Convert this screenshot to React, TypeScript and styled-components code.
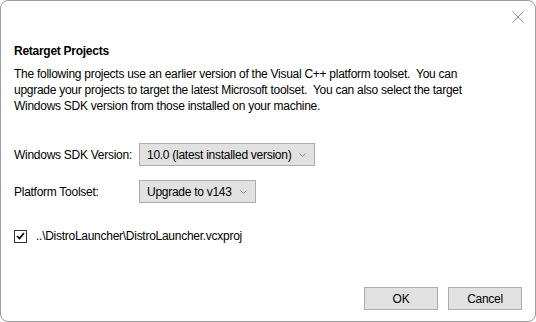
import React from "react";
import styled, { createGlobalStyle } from "styled-components";

const GlobalStyle = createGlobalStyle`
  html, body {
    margin: 0;
    padding: 0;
    background: #ffffff;
  }
  body {
    font-family: "Liberation Sans", Arial, sans-serif;
    font-size: 12px;
    letter-spacing: -0.27px;
    color: #000;
  }
`;

const Window = styled.div`
  box-sizing: border-box;
  width: 536px;
  height: 322px;
  background: #ffffff;
  border: 1px solid #9c9c9c;
  border-radius: 8px;
  display: flex;
  flex-direction: column;
  overflow: hidden;
`;

const TitleBar = styled.div`
  height: 31px;
  display: flex;
  justify-content: flex-end;
  align-items: center;
  padding-right: 10px;
`;

const CloseButton = styled.button`
  width: 14px;
  height: 14px;
  padding: 0;
  border: none;
  background: none;
  display: flex;
  align-items: center;
  justify-content: center;
`;

const Content = styled.div`
  flex: 1;
  display: flex;
  flex-direction: column;
  padding: 0 13px 11px 13px;
`;

const Title = styled.h1`
  margin: 11px 0 0 0;
  font-size: 12px;
  font-weight: 700;
  line-height: 16px;
`;

const Intro = styled.p`
  margin: 7px 0 0 0;
  line-height: 16px;
  white-space: pre;
`;

const Field = styled.div<{ $top: number }>`
  display: flex;
  align-items: center;
  margin-top: ${(p) => p.$top}px;
`;

const Label = styled.label`
  width: 125px;
  line-height: 16px;
`;

const Select = styled.div`
  box-sizing: border-box;
  height: 23px;
  display: flex;
  align-items: center;
  gap: 8px;
  padding: 0 8px 0 7px;
  background: #e1e1e1;
  border: 1px solid #adadad;
`;

const CheckRow = styled.div`
  display: flex;
  align-items: center;
  gap: 9px;
  margin-top: 25px;
  line-height: 16px;
`;

const Box = styled.span`
  box-sizing: border-box;
  width: 13px;
  height: 13px;
  border: 1px solid #333333;
  background: #fff;
  display: flex;
  align-items: center;
  justify-content: center;
`;

const Footer = styled.div`
  margin-top: auto;
  display: flex;
  justify-content: flex-end;
  gap: 10px;
`;

const Button = styled.button`
  box-sizing: border-box;
  width: 74px;
  height: 23px;
  background: #e1e1e1;
  border: 1px solid #adadad;
  font-family: inherit;
  font-size: 12px;
  letter-spacing: inherit;
  color: #000;
  padding: 0;
`;

const Chevron = () => (
  <svg width="7" height="4" viewBox="0 0 7 4">
    <path d="M0.5 0.5 L3.5 3.5 L6.5 0.5" fill="none" stroke="#8a8a8a" strokeWidth="1" />
  </svg>
);

function App() {
  return (
    <>
      <GlobalStyle />
      <Window>
        <TitleBar>
          <CloseButton aria-label="Close">
            <svg width="12" height="12" viewBox="0 0 12 12">
              <path d="M0.5 0.5 L11.5 11.5 M11.5 0.5 L0.5 11.5" stroke="#8f8f8f" strokeWidth="1" />
            </svg>
          </CloseButton>
        </TitleBar>
        <Content>
          <Title>Retarget Projects</Title>
          <Intro>
            {"The following projects use an earlier version of the Visual C++ platform toolset.  You can\n" +
              "upgrade your projects to target the latest Microsoft toolset.  You can also select the target\n" +
              "Windows SDK version from those installed on your machine."}
          </Intro>
          <Field $top={29}>
            <Label>Windows SDK Version:</Label>
            <Select>
              10.0 (latest installed version)
              <Chevron />
            </Select>
          </Field>
          <Field $top={14}>
            <Label>Platform Toolset:</Label>
            <Select>
              Upgrade to v143
              <Chevron />
            </Select>
          </Field>
          <CheckRow>
            <Box>
              <svg width="9" height="8" viewBox="0 0 9 8">
                <path d="M1 4 L3.5 6.5 L8 1" fill="none" stroke="#000" strokeWidth="1.6" />
              </svg>
            </Box>
            ..\DistroLauncher\DistroLauncher.vcxproj
          </CheckRow>
          <Footer>
            <Button>OK</Button>
            <Button>Cancel</Button>
          </Footer>
        </Content>
      </Window>
    </>
  );
}

export default App;
